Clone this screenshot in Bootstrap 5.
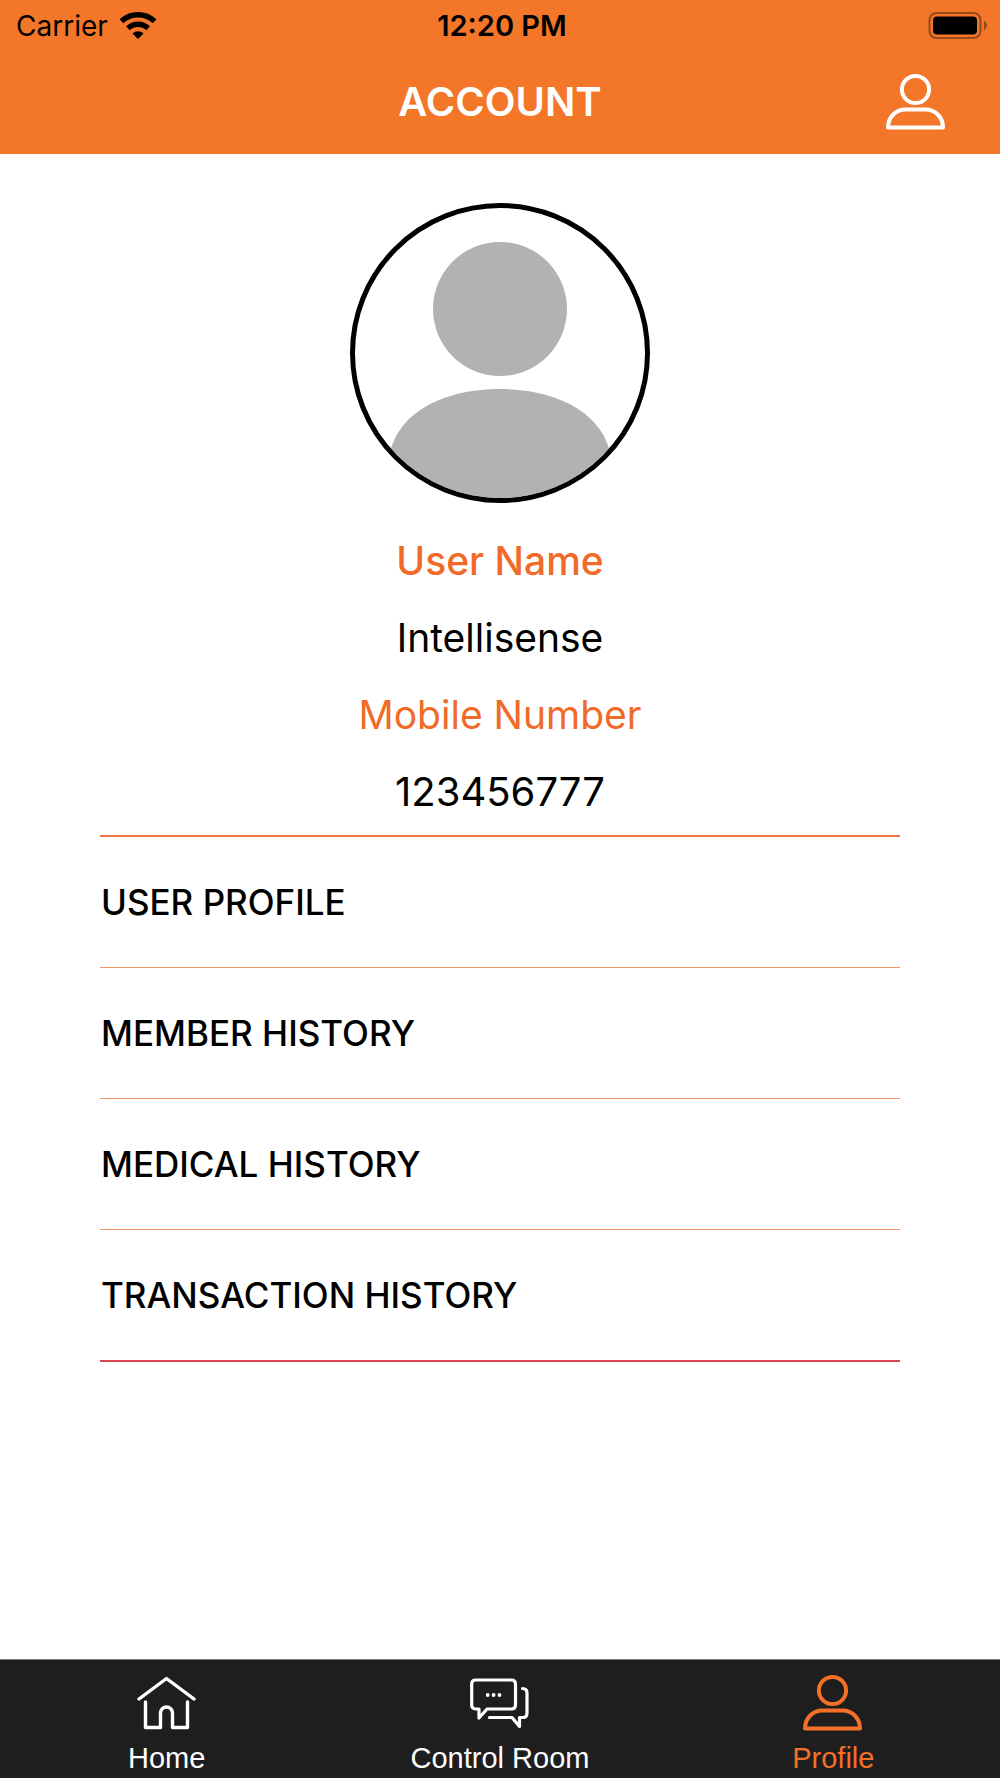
<!DOCTYPE html>
<html lang="en">
<head>
<meta charset="utf-8">
<meta name="viewport" content="width=device-width, initial-scale=1">
<title>Account</title>
<link href="https://cdn.jsdelivr.net/npm/bootstrap@5.3.0/dist/css/bootstrap.min.css" rel="stylesheet">
<style>
  :root { --brand: #f47629; --brand-text: #f26a28; }
  body { font-family: Inter, "Liberation Sans", sans-serif; color: #000; background: #fff; }
  .app-header { background: var(--brand); }
  .status-bar { height: 51px; padding: 0 12px 0 16px; font-size: 28px; line-height: 34px; }
  .status-time { font-size: 29px; font-weight: 600; }
  .title-bar { height: 103px; padding: 0 54px 1px; }
  .title-bar h1 { font-size: 40px; line-height: 48px; font-weight: 600; color: #fff; }
  .icon-60 { width: 60px; height: 60px; display: block; fill: none; stroke: currentColor; stroke-linejoin: round; stroke-linecap: round; }
  .account-main { padding: 49px 10% 0; }
  .avatar { width: 300px; height: 300px; border: 5px solid #000; background: #fff; }
  .details { margin: 19px 0 5px; font-size: 39px; line-height: 77px; font-weight: 400; }
  .details dt { font-weight: 400; color: var(--brand-text); }
  .details dt.strong-label { font-weight: 500; }
  .details .phone { font-size: 40px; }
  .menu-list { border-top: 2px solid #ee7a41; }
  .menu-list li { border-bottom: 1px solid #f3976b; }
  .menu-list li:last-child { border-bottom: 2px solid #da4453; }
  .menu-list a { padding: 0 1px; font-size: 35px; line-height: 130px; font-weight: 500; }
  .tab-bar { background: #1e1e1e; border-top: 1px solid #777; font-family: "Liberation Sans", Arial, sans-serif; font-size: 29px; line-height: 34px; }
  .tab-bar a { padding: 13px 0 3px; gap: 8px; color: #fff; }
  .tab-bar a.active { color: #f46f27; }
</style>
<script src="https://cdn.jsdelivr.net/npm/bootstrap@5.3.0/dist/js/bootstrap.bundle.min.js"></script>
</head>
<body class="d-flex flex-column min-vh-100">
<svg class="d-none" aria-hidden="true">
  <symbol id="person" viewBox="0 0 60 60">
    <circle cx="29.5" cy="17.5" r="13.6" stroke-width="4"/>
    <path d="M2 55.5C2 45.5 9.5 37.5 19.5 37.5H39.5C49.5 37.5 57 45.5 57 55.5Z" stroke-width="4"/>
  </symbol>
</svg>

<header class="app-header">
  <div class="status-bar row g-0 align-items-center">
    <div class="col d-flex align-items-center">
      <span>Carrier</span>
      <svg class="ms-2" width="44" height="34" viewBox="-1 0 44 34" aria-hidden="true">
        <g fill="none" stroke="#000" stroke-width="5.4">
          <path d="M4.4 12.3A24.3 24.3 0 0 1 37.6 12.3"/>
          <path d="M10.9 19.3A14.8 14.8 0 0 1 31.1 19.3"/>
        </g>
        <path d="M21 30L15.5 24.5A8 8 0 0 1 26.5 24.5Z"/>
      </svg>
    </div>
    <div class="col-auto status-time">12:20 PM</div>
    <div class="col d-flex justify-content-end">
      <svg width="60" height="28" viewBox="0 0 60 28" aria-label="Battery full" role="img">
        <rect x="1.5" y="1" width="51" height="25" rx="7" fill="none" stroke="#98491a" stroke-width="2"/>
        <rect x="5" y="4.5" width="44" height="18" rx="4"/>
        <path d="M56 8.5Q59 10.5 59 13.5T56 18.5Z" fill="#98491a"/>
      </svg>
    </div>
  </div>
  <div class="title-bar row g-0 align-items-center">
    <div class="col"></div>
    <h1 class="col-auto mb-0">ACCOUNT</h1>
    <div class="col d-flex justify-content-end">
      <a href="#profile" class="text-white" aria-label="Profile"><svg class="icon-60" aria-hidden="true"><use href="#person"/></svg></a>
    </div>
  </div>
</header>

<main class="account-main flex-grow-1">
  <div class="avatar rounded-circle overflow-hidden mx-auto">
    <svg class="d-block w-100 h-100" viewBox="0 0 290 290" fill="#b2b2b2" role="img" aria-label="User photo">
      <circle cx="145" cy="101" r="67"/>
      <path d="M145 181C203 181 250 206 256 250V290H34V250C40 206 87 181 145 181Z"/>
    </svg>
  </div>
  <dl class="details text-center">
    <dt class="strong-label">User Name</dt>
    <dd class="mb-0">Intellisense</dd>
    <dt>Mobile Number</dt>
    <dd class="phone mb-0">123456777</dd>
  </dl>
  <ul class="menu-list list-unstyled mb-0">
    <li><a class="d-block text-reset text-decoration-none" href="#user">USER PROFILE</a></li>
    <li><a class="d-block text-reset text-decoration-none" href="#member">MEMBER HISTORY</a></li>
    <li><a class="d-block text-reset text-decoration-none" href="#medical">MEDICAL HISTORY</a></li>
    <li><a class="d-block text-reset text-decoration-none" href="#transactions">TRANSACTION HISTORY</a></li>
  </ul>
</main>

<nav class="tab-bar row g-0 sticky-bottom" aria-label="Main">
  <a class="col d-flex flex-column align-items-center text-decoration-none" href="#home">
    <svg class="icon-60" viewBox="0 0 60 60" stroke-width="3.4" aria-hidden="true">
      <path d="M2 26L29.5 5.5L57 26M8.5 29V54.5H23.5V40A6 6 0 0 1 35.5 40V54.5H50.5V29"/>
    </svg>
    <span>Home</span>
  </a>
  <a class="col d-flex flex-column align-items-center text-decoration-none" href="#control-room">
    <svg class="icon-60" viewBox="0 0 60 60" stroke-width="3.2" aria-hidden="true">
      <path d="M5.5 7H41.500Q45.500 7 45.500 11V32Q45.500 36 41.500 36H17L9 45V36H5.500Q1.700 36 1.700 32V11Q1.700 7 5.500 7Z"/>
      <path d="M52.5 15.5Q57 15.5 57 20V40Q57 44.5 53 44.5H49.5V53.5L42 44.5H19.5"/>
      <g fill="currentColor" stroke="none"><circle cx="17.7" cy="22" r="1.9"/><circle cx="23.6" cy="22" r="1.9"/><circle cx="29.5" cy="22" r="1.9"/></g>
    </svg>
    <span>Control Room</span>
  </a>
  <a class="col d-flex flex-column align-items-center text-decoration-none active" aria-current="page" href="#profile">
    <svg class="icon-60" aria-hidden="true"><use href="#person"/></svg>
    <span>Profile</span>
  </a>
</nav>
</body>
</html>
